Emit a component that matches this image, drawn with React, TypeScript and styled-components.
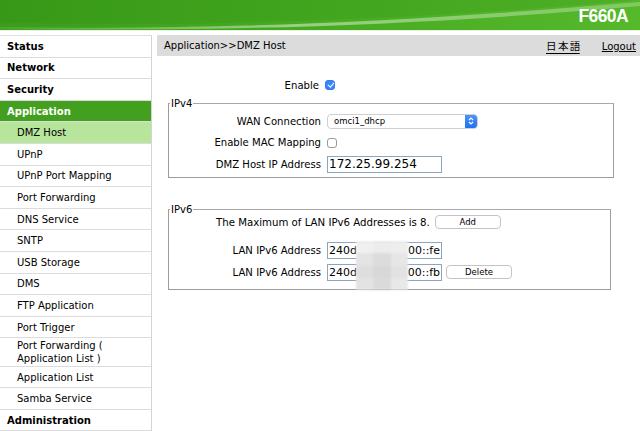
import styled, { createGlobalStyle } from "styled-components";

const GlobalStyle = createGlobalStyle`
  html, body {
    margin: 0;
    padding: 0;
    background: #fff;
  }
  body {
    font-family: "DejaVu Sans", Verdana, sans-serif;
    font-size: 10px;
    color: #000;
    width: 640px;
    height: 431px;
    overflow: hidden;
  }
`;

type NavEntry = {
  label: string;
  top?: boolean;
  active?: boolean;
  selected?: boolean;
  tall?: boolean;
};

const nav: NavEntry[] = [
  { label: "Status", top: true },
  { label: "Network", top: true },
  { label: "Security", top: true },
  { label: "Application", top: true, active: true },
  { label: "DMZ Host", selected: true },
  { label: "UPnP" },
  { label: "UPnP Port Mapping" },
  { label: "Port Forwarding" },
  { label: "DNS Service" },
  { label: "SNTP" },
  { label: "USB Storage" },
  { label: "DMS" },
  { label: "FTP Application" },
  { label: "Port Trigger" },
  { label: "Port Forwarding (\nApplication List )", tall: true },
  { label: "Application List" },
  { label: "Samba Service" },
  { label: "Administration", top: true },
];

// blurred-out part of the IPv6 addresses
const mosaic = [
  "#f0f0f0", "#ececec", "#eeeeee",
  "#e4e4e4", "#dcdcdc", "#e6e6e6",
  "#dedede", "#d8d8d8", "#e2e2e2",
  "#e3e3e3", "#dadada", "#e8e8e8",
];

export default function App() {
  return (
    <>
      <GlobalStyle />
      <Header>
        <svg width="640" height="30" viewBox="0 0 640 30" style={{ position: "absolute", left: 0, top: 0 }}>
          <defs>
            <linearGradient id="hg" x1="0" y1="0" x2="1" y2="0">
              <stop offset="0" stopColor="#3a9c19" />
              <stop offset="0.5" stopColor="#47ab22" />
              <stop offset="1" stopColor="#56b82b" />
            </linearGradient>
            <linearGradient id="sw" x1="0" y1="0" x2="1" y2="0">
              <stop offset="0" stopColor="#ffffff" stopOpacity="0.1" />
              <stop offset="0.45" stopColor="#ffffff" stopOpacity="0.45" />
              <stop offset="1" stopColor="#ffffff" stopOpacity="0.25" />
            </linearGradient>
          </defs>
          <rect width="640" height="30" fill="url(#hg)" />
          <path d="M0 22 C 180 28, 420 20, 640 0 L0 0 Z" fill="#2c8a12" opacity="0.18" />
          <path d="M0 27 C 200 30, 380 24, 640 2 L640 6 C 400 27, 220 31, 0 29.5 Z" fill="url(#sw)" />
        </svg>
        <Model>F660A</Model>
      </Header>
      <Body>
        <Sidebar>
          {nav.map((n) => (
            <NavItem key={n.label} $top={n.top} $active={n.active} $selected={n.selected} $tall={n.tall}>
              {n.label}
            </NavItem>
          ))}
        </Sidebar>
        <Main>
          <Crumb>
            <span>Application&gt;&gt;DMZ Host</span>
            <CrumbLinks>
              <LangLink>日 本 語</LangLink>
              <CrumbLink>Logout</CrumbLink>
            </CrumbLinks>
          </Crumb>
          <EnableRow>
            <Label>Enable</Label>
            <Check $checked />
          </EnableRow>
          <Fieldset>
            <Legend>IPv4</Legend>
            <Row>
              <Label>WAN Connection</Label>
              <Select>
                <span>omci1_dhcp</span>
                <Stepper>
                  <svg width="6" height="10" viewBox="0 0 6 10">
                    <path d="M1 4 L3 2 L5 4 M1 6 L3 8 L5 6" stroke="#fff" strokeWidth="1.2" fill="none" />
                  </svg>
                </Stepper>
              </Select>
            </Row>
            <Row>
              <Label>Enable MAC Mapping</Label>
              <Check />
            </Row>
            <Row>
              <Label>DMZ Host IP Address</Label>
              <TextBox>172.25.99.254</TextBox>
            </Row>
          </Fieldset>
          <Fieldset $v6>
            <Legend>IPv6</Legend>
            <MaxRow>
              <span>The Maximum of LAN IPv6 Addresses is 8.</span>
              <Button>Add</Button>
            </MaxRow>
            <Row $first>
              <Label>LAN IPv6 Address</Label>
              <TextBox $split>
                <span>240d:</span>
                <span>00::fe</span>
              </TextBox>
            </Row>
            <Row>
              <Label>LAN IPv6 Address</Label>
              <TextBox $split>
                <span>240d:</span>
                <span>00::fb</span>
              </TextBox>
              <Button $delete>Delete</Button>
            </Row>
            <Mosaic>
              {mosaic.map((c, i) => (
                <Tile key={i} $color={c} />
              ))}
            </Mosaic>
          </Fieldset>
        </Main>
      </Body>
    </>
  );
}

const Header = styled.header`
  position: relative;
  height: 30px;
  overflow: hidden;
  border-bottom: 1px solid #e6f3de;
`;

const Model = styled.div`
  position: absolute;
  right: 12px;
  top: 6px;
  font-family: "Liberation Sans", Arial, sans-serif;
  font-weight: bold;
  font-size: 17.5px;
  letter-spacing: -0.6px;
  color: #fff;
`;

const Body = styled.div`
  display: flex;
  gap: 5px;
  padding-top: 4px;
`;

const Sidebar = styled.nav`
  width: 151px;
  flex: none;
  border-top: 1px solid #e0e0e0;
  border-right: 1px solid #d4d4d4;
`;

const NavItem = styled.div<{ $top?: boolean; $active?: boolean; $selected?: boolean; $tall?: boolean }>`
  box-sizing: border-box;
  height: ${(p) => (p.$tall ? "28.4px" : "21.6px")};
  display: flex;
  align-items: center;
  white-space: pre-line;
  line-height: 13px;
  padding-left: ${(p) => (p.$top ? "7px" : "17px")};
  font-weight: ${(p) => (p.$top ? "bold" : "normal")};
  font-size: 10px;
  border-bottom: 1px solid #dcdcdc;
  color: ${(p) => (p.$active ? "#fff" : "#000")};
  background: ${(p) => (p.$active ? "#43a01f" : p.$selected ? "#b7e59c" : "#fff")};
`;

const Main = styled.main`
  flex: 1;
  display: flex;
  flex-direction: column;
`;

const Crumb = styled.div`
  height: 21px;
  background: #dcdcdc;
  display: flex;
  align-items: center;
  justify-content: space-between;
  padding: 0 4px 0 7px;
`;

const CrumbLinks = styled.div`
  display: flex;
  align-items: center;
  gap: 22px;
  line-height: 13px;
`;

const LangLink = styled.span`
  font-family: "Noto Sans CJK JP", sans-serif;
  font-size: 10.5px;
  line-height: 13px;
  text-decoration: underline;
  text-underline-offset: 3px;
  letter-spacing: -0.5px;
`;

const CrumbLink = styled.span`
  text-decoration: underline;
  margin-top: 2px;
`;

const EnableRow = styled.div`
  display: flex;
  align-items: center;
  gap: 6px;
  margin-top: 22px;
  height: 14px;
  & > span:first-child {
    width: 162px;
  }
`;

const Label = styled.span`
  width: 152px;
  text-align: right;
  flex: none;
  font-size: 10.1px;
`;

const Check = styled.span<{ $checked?: boolean }>`
  box-sizing: border-box;
  width: 10px;
  height: 10px;
  border-radius: 3px;
  border: 1px solid ${(p) => (p.$checked ? "#2e7cf6" : "#9a9a9a")};
  background: ${(p) => (p.$checked ? "#3a86f7" : "#fff")};
  position: relative;
  &::after {
    content: "";
    display: ${(p) => (p.$checked ? "block" : "none")};
    position: absolute;
    left: 2.5px;
    top: 0px;
    width: 2.5px;
    height: 5px;
    border: solid #fff;
    border-width: 0 1.5px 1.5px 0;
    transform: rotate(40deg);
  }
`;

const Fieldset = styled.div<{ $v6?: boolean }>`
  position: relative;
  box-sizing: border-box;
  margin: ${(p) => (p.$v6 ? "31px 0 0 11px" : "11px 0 0 11px")};
  width: ${(p) => (p.$v6 ? "443px" : "446px")};
  border: 1px solid #9c9c9c;
  border-top-color: #a8a8a8;
  padding: ${(p) => (p.$v6 ? "4px 0 5.5px 0" : "6.25px 0 2.25px 0")};
  display: flex;
  flex-direction: column;
`;

const Legend = styled.span`
  position: absolute;
  top: -7px;
  left: 1px;
  background: #fff;
  padding: 0 1px;
  line-height: 13px;
`;

const Row = styled.div<{ $first?: boolean }>`
  display: flex;
  align-items: center;
  gap: 6px;
  height: 21.5px;
  margin-top: ${(p) => (p.$first ? "10px" : "0")};
`;

const Select = styled.div`
  box-sizing: border-box;
  width: 151px;
  height: 15px;
  border: 1px solid #cfcfcf;
  border-radius: 4px;
  display: flex;
  align-items: center;
  justify-content: space-between;
  padding-left: 6px;
  font-size: 8.5px;
  overflow: hidden;
`;

const Stepper = styled.span`
  width: 12px;
  height: 15px;
  background: linear-gradient(#4b95f8, #1f6ef3);
  display: flex;
  align-items: center;
  justify-content: center;
  border-radius: 0 4px 4px 0;
`;

const TextBox = styled.div<{ $split?: boolean }>`
  box-sizing: border-box;
  width: 115px;
  height: 17px;
  border: 1px solid #8aa6c0;
  display: flex;
  align-items: center;
  justify-content: ${(p) => (p.$split ? "space-between" : "flex-start")};
  padding: 0 1px;
  font-size: ${(p) => (p.$split ? "11px" : "12px")};
  white-space: nowrap;
  overflow: hidden;
`;

const MaxRow = styled.div`
  display: flex;
  align-items: center;
  gap: 5px;
  padding-left: 47px;
  height: 16px;
  font-size: 10.2px;
`;

const Button = styled.span<{ $delete?: boolean }>`
  box-sizing: border-box;
  width: 66px;
  height: 14px;
  border: 1px solid #c4c4c4;
  border-radius: 4px;
  background: #fff;
  display: flex;
  align-items: center;
  justify-content: center;
  font-size: 8.5px;
  margin-left: ${(p) => (p.$delete ? "-2px" : "0")};
`;

const Mosaic = styled.div`
  position: absolute;
  left: 187px;
  top: 31px;
  width: 52px;
  height: 49px;
  display: grid;
  grid-template-columns: repeat(3, 1fr);
  grid-template-rows: repeat(4, 1fr);
  filter: blur(1px);
`;

const Tile = styled.span<{ $color: string }>`
  background: ${(p) => p.$color};
`;
